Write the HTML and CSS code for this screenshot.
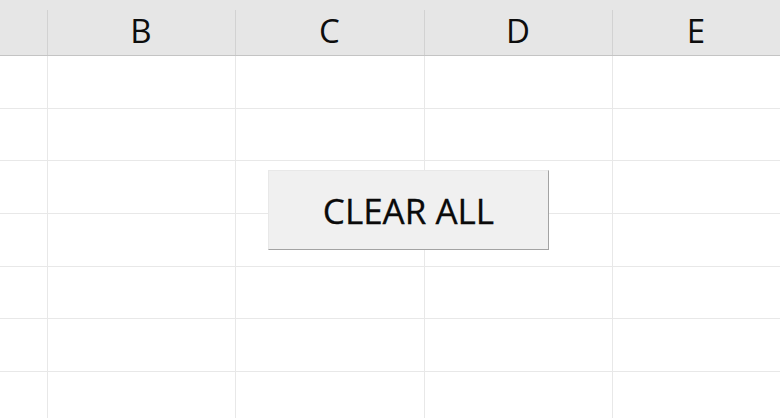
FILE: index.html
```html
<!DOCTYPE html>
<html lang="en">
<head>
    <meta charset="UTF-8">
    <meta name="viewport" content="width=device-width, initial-scale=1.0">
    <title>Sheet</title>
    <link rel="stylesheet" href="styles.css">
</head>
<body>
    <div class="sheet">
        <div class="header">
            <div class="corner"></div>
            <div class="col-head">B</div>
            <div class="col-head">C</div>
            <div class="col-head">D</div>
            <div class="col-head">E</div>
        </div>

        <div class="row"><div></div><div></div><div></div><div></div><div></div></div>
        <div class="row"><div></div><div></div><div></div><div></div><div></div></div>
        <div class="row"><div></div><div></div><div></div><div></div><div></div></div>
        <div class="row"><div></div><div></div><div></div><div></div><div></div></div>
        <div class="row"><div></div><div></div><div></div><div></div><div></div></div>
        <div class="row"><div></div><div></div><div></div><div></div><div></div></div>
        <div class="row"><div></div><div></div><div></div><div></div><div></div></div>

        <button class="clear-btn">CLEAR ALL</button>
    </div>
</body>
</html>
```

FILE: styles.css
```css
html, body {
    margin: 0;
    padding: 0;
    background: #ffffff;
    overflow: hidden;
}

body {
    font-family: "Open Sans", "Liberation Sans", sans-serif;
}

.sheet {
    position: relative;
    width: 780px;
    height: 418px;
    overflow: hidden;
}

.header,
.row {
    display: grid;
    grid-template-columns: 47px 188px 189px 188px 1fr;
}

.header {
    height: 55px;
    background: #e6e6e6;
    border-bottom: 1px solid #c4c4c4;
}

.col-head {
    position: relative;
    display: flex;
    align-items: center;
    justify-content: center;
    font-size: 33px;
    color: #0d0d0d;
    padding-top: 6px;
}

.col-head::before {
    content: "";
    position: absolute;
    left: 0;
    top: 10px;
    bottom: 0;
    width: 1px;
    background: #d2d2d2;
}

.row {
    height: 51.67px;
    border-bottom: 1px solid #e8e8e8;
}

.row > div + div {
    border-left: 1px solid #e8e8e8;
}

.clear-btn {
    position: absolute;
    left: 268px;
    top: 170px;
    width: 281px;
    height: 80px;
    margin: 0;
    padding: 0;
    background: #f0f0f0;
    border: 1px solid #a3a3a3;
    border-top-color: #e8e8e8;
    border-left-color: #e8e8e8;
    font-family: "Open Sans", "Liberation Sans", sans-serif;
    font-size: 35px;
    color: #0a0a0a;
    -webkit-text-stroke: 0.3px #0a0a0a;
}
```
